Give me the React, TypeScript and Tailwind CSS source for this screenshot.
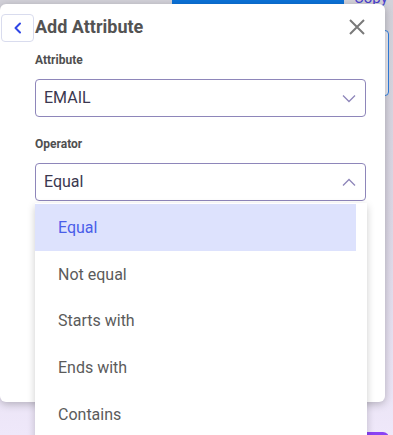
import React from "react";

const items = ["Equal", "Not equal", "Starts with", "Ends with", "Contains"];

export default function App() {
  return (
    <div
      className="relative w-[393px] h-[435px] overflow-hidden bg-gradient-to-b from-[#d3d2da] via-[#dcd8e6] to-[#efe8fa]"
      style={{ fontFamily: "Roboto, 'Noto Sans', sans-serif" }}
    >
      {/* background page */}
      <div className="absolute left-[172px] top-0 h-[5px] w-[172px] bg-[#0b72d9]" />
      <div className="absolute left-[354px] top-[-9px] text-[15px] text-[#4a3fd0] leading-none">Copy</div>
      <div className="absolute left-[340px] top-[30px] h-[66px] w-[49px] rounded-[4px] border border-[#2f7fe0] bg-[#ecebf1]" />
      <div className="absolute left-[335px] top-[432px] h-[10px] w-[54px] rounded-t-[6px] bg-[#8a43f4]" />

      {/* modal */}
      <div className="absolute left-0 top-[4px] w-[385px] h-[398px] rounded-[6px] bg-white shadow-[0_2px_8px_rgba(0,0,0,0.25)]">
        <div className="flex items-center h-[45px] pr-[20px]">
          <button className="ml-[1px] mt-[2px] flex h-[28px] w-[33px] items-center justify-center rounded-[4px] border border-[#d9dcee] bg-white">
            <svg width="10" height="12" viewBox="0 0 10 12" fill="none">
              <path d="M7 1.5 L2.5 6 L7 10.5" stroke="#2f46e6" strokeWidth="2" strokeLinecap="round" strokeLinejoin="round" />
            </svg>
          </button>
          <div className="ml-[1px] text-[18px] font-bold text-[#535353] leading-none">Add Attribute</div>
          <div className="flex-1" />
          <svg width="16" height="16" viewBox="0 0 16 16" className="mt-[1px]">
            <path d="M1 1 L15 15 M15 1 L1 15" stroke="#7a7a7a" strokeWidth="2" />
          </svg>
        </div>

        <div className="px-[35px] pr-[19px]">
          <div className="mt-[4px] text-[12px] font-bold text-[#4f4f4f] leading-[14px]">Attribute</div>
          <div className="mt-[12px] flex h-[38px] items-center justify-between rounded-[4px] border border-[#8e86ba] pl-[8px] pr-[9px]">
            <span className="text-[16px] text-[#3b3850]">EMAIL</span>
            <svg width="14" height="9" viewBox="0 0 14 9" fill="none">
              <path d="M1 1.5 L7 7.5 L13 1.5" stroke="#8e86ba" strokeWidth="1.3" />
            </svg>
          </div>

          <div className="mt-[20px] text-[12px] font-bold text-[#4f4f4f] leading-[14px]">Operator</div>
          <div className="mt-[12px] flex h-[38px] items-center justify-between rounded-[4px] border border-[#8e86ba] pl-[8px] pr-[9px]">
            <span className="text-[16px] text-[#3b3850]">Equal</span>
            <svg width="14" height="9" viewBox="0 0 14 9" fill="none">
              <path d="M1 7.5 L7 1.5 L13 7.5" stroke="#8e86ba" strokeWidth="1.3" />
            </svg>
          </div>
        </div>
      </div>

      {/* dropdown menu */}
      <div className="absolute left-[35px] top-[203px] w-[332px] h-[260px] bg-white pr-[11px] shadow-[0_3px_8px_rgba(0,0,0,0.2)]">
        <div className="flex flex-col pt-[1px]">
          {items.map((it, i) => (
            <div
              key={it}
              className={
                i === 0
                  ? "flex h-[47px] items-center pl-[23px] pt-[1px] text-[16px] bg-[#dde2fd] text-[#4a5ee9]"
                  : "flex h-[46.6px] items-center pl-[23px] pt-[1px] text-[16px] text-[#5b5b5b]"
              }
            >
              {it}
            </div>
          ))}
        </div>
      </div>
    </div>
  );
}
